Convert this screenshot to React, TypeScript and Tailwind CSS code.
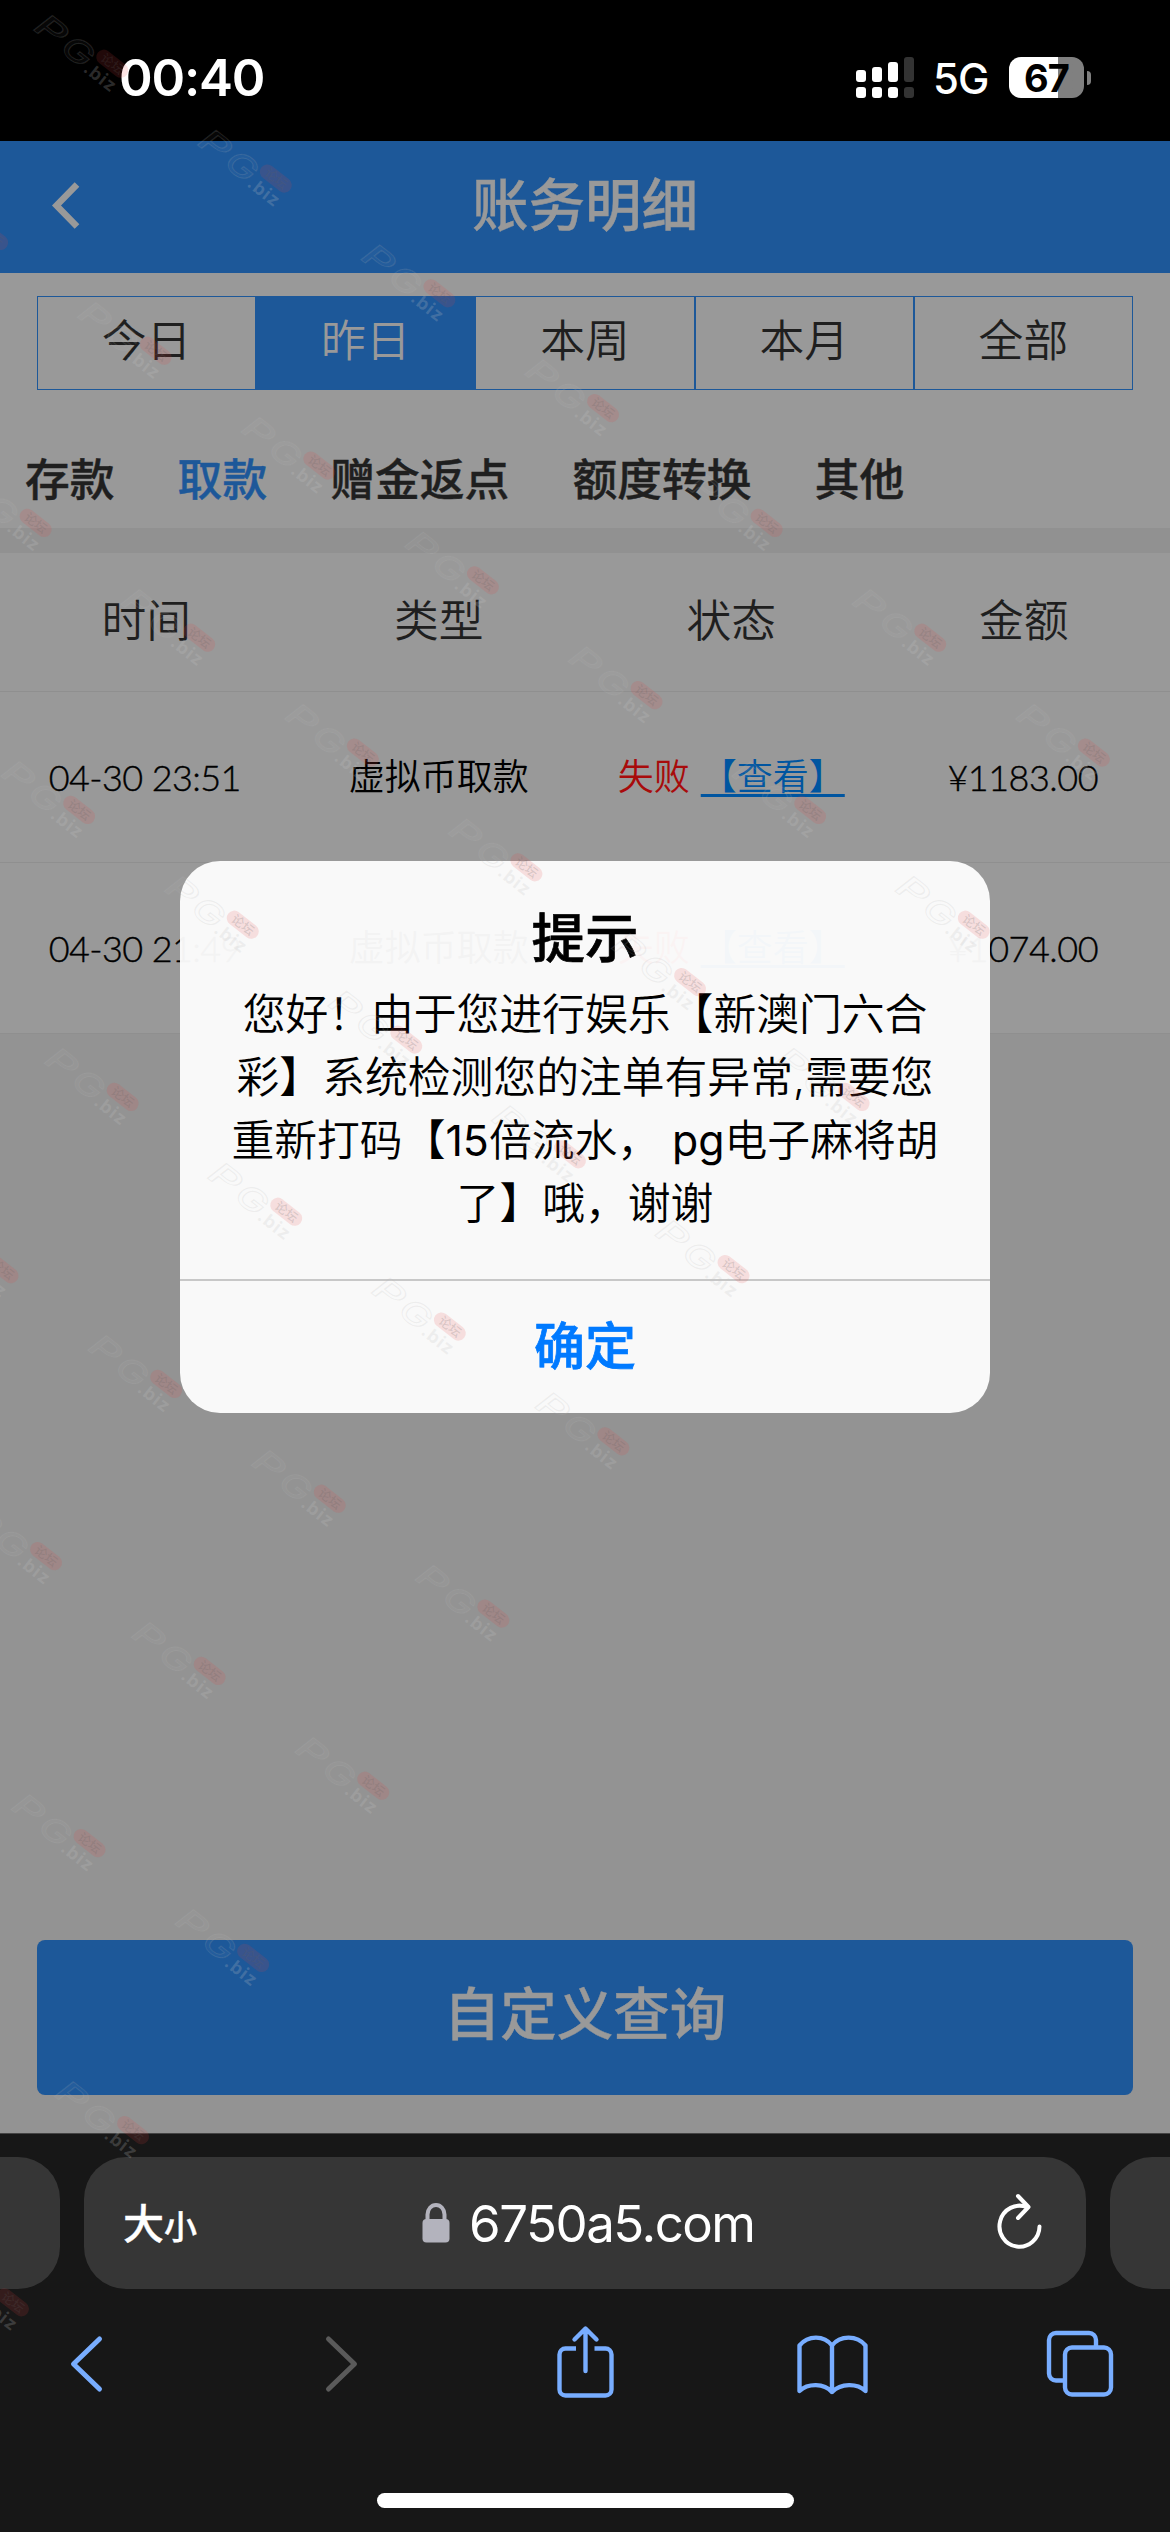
import React from "react";

const records = [
  { time: "04-30 23:51", type: "虚拟币取款", status: "失败", amount: "¥1183.00" },
  { time: "04-30 21:49", type: "虚拟币取款", status: "失败", amount: "¥1074.00" },
];

const ranges = ["今日", "昨日", "本周", "本月", "全部"];
const kinds = ["存款", "取款", "赠金返点", "额度转换", "其他"];
const columns = ["时间", "类型", "状态", "金额"];

function StatusBar() {
  return (
    <div className="flex h-[141px] items-start bg-black text-white font-['Inter']">
      <div className="ml-[119px] mt-[46px] w-[160px] whitespace-nowrap text-[51px] leading-[64px] font-semibold tracking-[-1.2px]">
        00:40
      </div>
      <svg className="ml-[577px] mt-[57px] h-[42px] w-[60px]" viewBox="0 0 60 42">
        <g fill="#fff">
          <rect x="0" y="13" width="10" height="12" rx="3" />
          <rect x="16" y="10" width="10" height="15" rx="3" />
          <rect x="32" y="5" width="10" height="20" rx="3" />
          <rect x="0" y="30" width="10" height="11" rx="3" />
          <rect x="16" y="30" width="10" height="11" rx="3" />
          <rect x="32" y="30" width="10" height="11" rx="3" />
        </g>
        <g fill="#333">
          <rect x="48" y="0" width="10" height="25" rx="3" />
          <rect x="48" y="30" width="10" height="11" rx="3" />
        </g>
      </svg>
      <div className="ml-[17px] mt-[54px] w-[58px] whitespace-nowrap text-[42px] leading-[50px] font-[450] tracking-[-1px]">5G</div>
      <div className="ml-[18px] mt-[57px] flex items-center">
        <div className="flex h-[41px] w-[75px] items-center justify-center rounded-[12px] bg-linear-to-r from-white from-66% to-[#808080] to-66% text-[38px] leading-none font-bold tracking-[-1px] text-black">
          67
        </div>
        <div className="ml-[3px] h-[14px] w-[4px] rounded-r-full bg-[#808080]" />
      </div>
    </div>
  );
}

function PageHeader() {
  return (
    <div className="relative flex h-[132px] items-center justify-center bg-[#1d5899]">
      <svg className="absolute left-[50px] top-[40px] h-[48px] w-[32px]" viewBox="0 0 32 48" fill="none">
        <path d="M27 3.5 6.5 24.5 27 45.5" stroke="#999" strokeWidth="6.5" />
      </svg>
      <h1 className="pb-[2px] text-[56.5px] leading-[64px] font-medium text-[#999] [-webkit-text-stroke:0.4px]">账务明细</h1>
    </div>
  );
}

function RangeTabs() {
  return (
    <div className="mx-[37px] mt-[23px] grid h-[94px] grid-cols-5">
      {ranges.map((r, i) => (
        <div
          key={r}
          className={
            "flex items-center justify-center border border-[#1d5899] pb-[2px] text-[44.8px] font-[350] " +
            (i === 1 ? "bg-[#1d5899] text-[#999]" : "text-[#1f1f1f]")
          }
        >
          {r}
        </div>
      ))}
    </div>
  );
}

function KindTabs() {
  return (
    <div className="flex h-[138px] gap-[63px] pl-[25px] pt-[58px] text-[44.8px] leading-[64px] font-medium text-[#1f1f1f] [-webkit-text-stroke:0.4px]">
      {kinds.map((k, i) => (
        <span key={k} className={i === 1 ? "text-[#1d5899]" : ""}>
          {k}
        </span>
      ))}
    </div>
  );
}

function RecordTable() {
  return (
    <div>
      <div className="grid h-[139px] grid-cols-4 items-center border-b border-[#8f8f8f] text-center text-[44.8px] font-[350] text-[#1f1f1f]">
        {columns.map((c) => (
          <div key={c}>{c}</div>
        ))}
      </div>
      {records.map((r) => (
        <div key={r.time} className="grid h-[171px] grid-cols-4 items-center border-b border-[#8f8f8f] text-center text-[36px] font-[350] text-black">
          <div className="pr-[3px] font-['Lato'] font-light tracking-[-0.6px] [-webkit-text-stroke:0.4px]">{r.time}</div>
          <div>{r.type}</div>
          <div className="flex justify-center gap-[11px] whitespace-nowrap text-[#a80b0b]">
            <span>{r.status}</span>
            <span className="text-[#0055a0] underline decoration-[3px] underline-offset-[4px]">【查看】</span>
          </div>
          <div className="pr-[2px] font-['Lato'] font-light tracking-[-0.5px] [-webkit-text-stroke:0.4px]">{r.amount}</div>
        </div>
      ))}
    </div>
  );
}

function Dialog() {
  return (
    <div className="absolute left-[180px] top-[861px] flex h-[552px] w-[810px] flex-col overflow-hidden rounded-[40px] bg-[#fdfdfd]/96 text-center text-black">
      <div className="h-[420px] border-b-2 border-[#c8c8c8] pt-[45px]">
        <h2 className="text-[53.5px] leading-[66px] font-medium [-webkit-text-stroke:0.6px]">提示</h2>
        <p className="mt-[11px] whitespace-nowrap text-[42.8px] leading-[63px] font-[350]">
          您好！由于您进行娱乐【新澳门六合
          <br />
          彩】系统检测您的注单有异常,需要您
          <br />
          重新打码【<span className="font-normal">15</span>倍流水， <span className="font-normal">pg</span>电子麻将胡
          <br />
          了】哦，谢谢
        </p>
      </div>
      <button className="flex flex-1 items-center justify-center pt-[1px] text-[51px] font-medium text-[#007aff] [-webkit-text-stroke:0.7px]">确定</button>
    </div>
  );
}

function AddressBar() {
  return (
    <div className="flex h-[132px] justify-between">
      <div className="w-[60px] rounded-r-[42px] bg-[#363636]" />
      <div className="relative flex w-[1002px] items-center rounded-[42px] bg-[#363636] text-white">
        <div className="ml-[39px] mt-[4px] flex w-[80px] items-baseline whitespace-nowrap leading-[60px] [-webkit-text-stroke:0.4px]">
          <span className="text-[41px] font-medium">大</span>
          <span className="text-[33px] font-medium">小</span>
        </div>
        <svg className="ml-[219px] h-[40px] w-[28px]" viewBox="0 0 28 40">
          <rect x="0.5" y="16" width="27" height="23.5" rx="4" fill="#b3b3bd" />
          <path d="M5.5 18V11.5a8.5 9.5 0 0 1 17 0V18" fill="none" stroke="#b3b3bd" strokeWidth="4" />
        </svg>
        <div className="ml-[19px] mt-[2px] whitespace-nowrap font-['Inter'] text-[51px] leading-[64px] tracking-[-1.5px]">6750a5.com</div>
        <svg className="absolute right-[42px] top-[36px] h-[58px] w-[48px]" viewBox="0 0 48 58" fill="none" stroke="#fff" strokeWidth="4" strokeLinecap="round" strokeLinejoin="round">
          <path d="M43.5 33.5A20 20.5 0 1 1 31 14.2" />
          <path d="M22 3 32.5 14 22 25" />
        </svg>
      </div>
      <div className="w-[60px] rounded-l-[42px] bg-[#363636]" />
    </div>
  );
}

function Toolbar() {
  return (
    <svg className="mt-[31px] h-[90px] w-[1170px]" viewBox="0 2320 1170 90" fill="none" stroke="#78adff" strokeWidth="4.4" strokeLinecap="round" strokeLinejoin="round">
      <path d="M99.5 2339 73.5 2364 99.5 2389" strokeWidth="5" />
      <path d="M328.5 2339 354.5 2364 328.5 2389" stroke="#5a5a5a" strokeWidth="5" />
      <path d="M576 2348.5H565.5a6 6 0 0 0-6 6V2389.5a6 6 0 0 0 6 6H605.5a6 6 0 0 0 6-6V2354.5a6 6 0 0 0-6-6H594.5" strokeLinecap="butt" />
      <path d="M585.5 2371V2329M574.5 2339.5 585.5 2328.5 596.5 2339.5" />
      <path d="M799.5 2391V2345.5C808 2335 824 2335 832 2345.5C840 2335 857 2335 865.5 2345.5V2391C857 2383 841 2383 832 2392C824 2383 808 2383 799.5 2391ZM832 2345.5V2392" />
      <path d="M1063 2380.5H1056a7 7 0 0 1-7-7V2340a7 7 0 0 1 7-7H1089a7 7 0 0 1 7 7V2347" strokeLinecap="butt" />
      <rect x="1065" y="2347.5" width="46" height="47" rx="7" />
    </svg>
  );
}

/* Every mark sits on a slanted lattice; rows shift along two basis vectors. */
const marks: { x: number; y: number }[] = [];
for (let j = 0; j <= 10; j++) {
  for (let i = -5; i <= 6 - j; i++) {
    const x = 34 + 163.6 * i + 43.5 * j;
    const y = 14 + 114.8 * i + 287 * j;
    if (x > -110 && y > -20 && y < 2320) marks.push({ x, y });
  }
}

function Watermarks() {
  return (
    <svg className="pointer-events-none absolute inset-0 h-[2532px] w-[1170px]" viewBox="0 0 1170 2532">
      {marks.map((m) => (
        <g key={m.x + "," + m.y} transform={"translate(" + m.x + " " + m.y + ") rotate(38)"}>
          <g className="font-['Inter'] font-medium italic" fill="#fff" fillOpacity="0.05" stroke="#b0b0b0" strokeOpacity="0.17" strokeWidth="1" fontSize="32">
            <text transform="translate(8 13) scale(1.5 1)">P</text>
            <text transform="translate(42 13.5) scale(1.3 1)">G</text>
          </g>
          <rect x="74" y="-16.5" width="36.5" height="15" rx="7.5" fill="#e84040" fillOpacity="0.14" />
          <text x="92.5" y="-4.5" textAnchor="middle" fontSize="12.5" fontWeight="500" fill="#606060" fillOpacity="0.2">
            论坛
          </text>
          <text x="73" y="15" fontSize="18" fontWeight="700" className="font-['Inter']" fill="#c4c4c4" fillOpacity="0.22" letterSpacing="1">
            .biz
          </text>
        </g>
      ))}
    </svg>
  );
}

export default function App() {
  return (
    <div className="relative flex h-[2532px] w-[1170px] flex-col overflow-hidden bg-[#939393] font-['Inter','Noto_Sans_CJK_SC',sans-serif]">
      <StatusBar />
      <PageHeader />
      <div className="bg-[#999]">
        <RangeTabs />
        <KindTabs />
        <div className="h-[25px] bg-[#919191]" />
        <RecordTable />
      </div>
      <button className="mx-[37px] mt-auto flex h-[155px] shrink-0 items-center justify-center rounded-[8px] bg-[#1d5899] pb-[5px] text-[56.5px] font-medium text-[#999] [-webkit-text-stroke:0.4px]">
        自定义查询
      </button>
      <div className="mt-[38px] h-[399px] shrink-0 border-t border-[#444] bg-[#171717] pt-[23px]">
        <AddressBar />
        <Toolbar />
        <div className="mx-auto mt-[83px] h-[15px] w-[417px] rounded-full bg-white" />
      </div>
      <Dialog />
      <Watermarks />
    </div>
  );
}
